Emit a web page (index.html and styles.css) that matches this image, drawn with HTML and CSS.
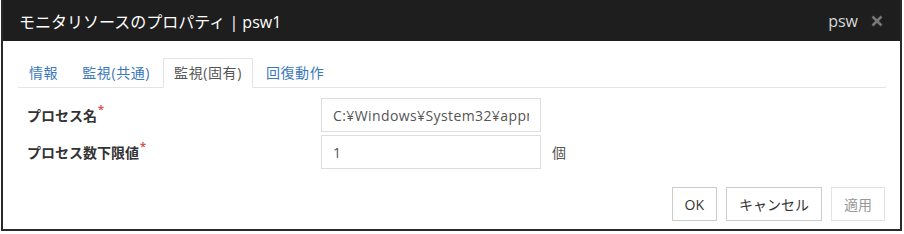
FILE: index.html
```html
<!DOCTYPE html>
<html lang="ja">
<head>
  <meta charset="UTF-8" />
  <title>モニタリソースのプロパティ | psw1</title>
  <link rel="stylesheet" href="styles.css">
</head>
<body>
  <div class="dialog">
    <div class="dialog-header">
      <h1>モニタリソースのプロパティ | psw1</h1>
      <span class="header-name">psw</span>
      <svg class="close" width="12" height="12" viewBox="0 0 12 12">
        <path d="M1.5 1.5 L10.5 10.5 M10.5 1.5 L1.5 10.5" stroke="#777" stroke-width="2.6" fill="none" />
      </svg>
    </div>

    <div class="dialog-body">
      <ul class="tabs">
        <li><a href="#">情報</a></li>
        <li><a href="#">監視(共通)</a></li>
        <li class="active"><a href="#">監視(固有)</a></li>
        <li><a href="#">回復動作</a></li>
      </ul>

      <div class="form">
        <div class="form-row">
          <label>プロセス名<span class="req">*</span></label>
          <input type="text" value="C:¥Windows¥System32¥appmgmt.exe" />
        </div>
        <div class="form-row">
          <label>プロセス数下限値<span class="req">*</span></label>
          <input type="text" value="1" />
          <span class="unit">個</span>
        </div>
      </div>

      <div class="buttons">
        <button>OK</button>
        <button>キャンセル</button>
        <button class="disabled">適用</button>
      </div>
    </div>
  </div>
</body>
</html>
```

FILE: styles.css
```css
body {
  margin: 0;
  font-family: "Open Sans", "Noto Sans CJK JP", sans-serif;
  background-color: #fff;
  color: #333;
}

.dialog {
  margin-left: 1px;
  width: 901px;
  height: 231px;
  box-sizing: border-box;
  border: 2px solid #2a2a2a;
  border-top-width: 0;
  background: #fff;
  display: flex;
  flex-direction: column;
}

.dialog-header {
  background-color: #1e1e1e;
  height: 41px;
  display: flex;
  align-items: center;
  padding: 0 17px 0 16px;
}
.dialog-header h1 {
  flex: 1;
  margin: 0;
  font-size: 16px;
  font-weight: normal;
  color: #fff;
}
.header-name {
  color: #d8d8d8;
  font-size: 16px;
}
.close {
  margin-left: 13px;
}

.dialog-body {
  flex: 1;
  padding: 17px 14px 0 15px;
  display: flex;
  flex-direction: column;
}

.tabs {
  list-style: none;
  margin: 0;
  padding: 0;
  display: flex;
  border-bottom: 1px solid #e4e4e4;
}
.tabs li {
  margin-right: 2px;
  margin-bottom: -1px;
}
.tabs a {
  display: block;
  padding: 4px 10px;
  line-height: 20px;
  font-size: 14px;
  letter-spacing: 0.6px;
  color: #3a78bd;
  text-decoration: none;
  border: 1px solid transparent;
}
.tabs li.active a {
  color: #555;
  background: #fff;
  border-color: #e4e4e4;
  border-bottom-color: #fff;
}

.form {
  padding-top: 10px;
  display: flex;
  flex-direction: column;
  gap: 3px;
}
.form-row {
  display: flex;
  align-items: center;
  height: 34px;
}
.form-row label {
  width: 294px;
  padding-left: 9px;
  font-size: 14px;
  font-weight: bold;
  color: #333;
}
.req {
  color: #d9534f;
  font-size: 11px;
  vertical-align: top;
  position: relative;
  top: -4px;
  margin-left: 1px;
}
.form-row input {
  width: 220px;
  height: 34px;
  box-sizing: border-box;
  border: 1px solid #ddd;
  padding: 0 11px;
  font-family: "Open Sans", "Noto Sans CJK JP", sans-serif;
  font-size: 14px;
  letter-spacing: 0.4px;
  color: #555;
}
.unit {
  margin-left: 11px;
  font-size: 14px;
  color: #555;
}

.buttons {
  margin-top: auto;
  margin-bottom: 8px;
  padding-right: 1px;
  display: flex;
  justify-content: flex-end;
  gap: 9px;
}
.buttons button {
  height: 34px;
  padding: 0 12px;
  background: #fff;
  border: 1px solid #ccc;
  font-family: "Open Sans", "Noto Sans CJK JP", sans-serif;
  font-size: 14px;
  color: #333;
}
.buttons button.disabled {
  border-color: #e2e2e2;
  color: #999;
}
```
